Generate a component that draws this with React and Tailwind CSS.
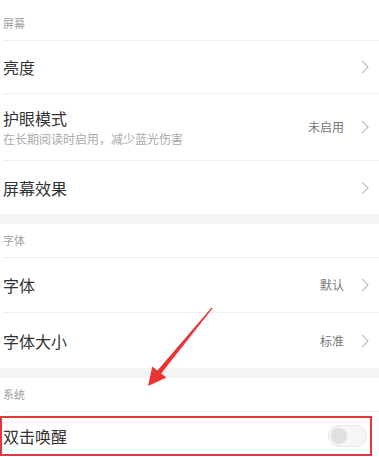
import React from 'react';

const font = { fontFamily: '"Noto Sans CJK SC", "Noto Sans", sans-serif' };

function Chevron() {
  return (
    <svg width="8" height="14" viewBox="0 0 8 14" className="shrink-0">
      <path d="M1 1 L7 7 L1 13" fill="none" stroke="#c4c4c4" strokeWidth="1.3" />
    </svg>
  );
}

function Header({ label, h }) {
  return (
    <div className={`${h} flex items-end pb-[9px] border-b border-[#efefef] text-[11px] text-[#a0a0a0]`}>
      {label}
    </div>
  );
}

function Row({ title, sub, value, h, last }) {
  return (
    <div className={`${h} flex items-center pr-[10px] ${last ? '' : 'border-b border-[#efefef]'}`}>
      <div className="flex-1 flex flex-col">
        <span className="text-[16px] leading-[20px] text-[#333]">{title}</span>
        {sub && <span className="text-[12px] leading-[16px] mt-[3px] text-[#aaa]">{sub}</span>}
      </div>
      {value && <span className="text-[12px] text-[#777] mr-[17px]">{value}</span>}
      <Chevron />
    </div>
  );
}

export default function App() {
  return (
    <div className="relative w-[379px] h-[457px] overflow-hidden bg-white" style={font}>
      <div className="pl-[3px]">
        <Header label="屏幕" h="h-[41px]" />
        <Row title="亮度" h="h-[53px]" />
        <Row title="护眼模式" sub="在长期阅读时启用，减少蓝光伤害" value="未启用" h="h-[67px]" />
        <Row title="屏幕效果" h="h-[53px]" last />
      </div>
      <div className="h-[10px] bg-[#f4f4f4]" />
      <div className="pl-[3px]">
        <Header label="字体" h="h-[34px]" />
        <Row title="字体" value="默认" h="h-[55px]" />
        <Row title="字体大小" value="标准" h="h-[55px]" last />
      </div>
      <div className="h-[10px] bg-[#f4f4f4]" />
      <div className="pl-[3px]">
        <Header label="系统" h="h-[34px]" />
        <div className="h-[48px] flex items-center pr-[12px]">
          <span className="flex-1 text-[16px] text-[#333]">双击唤醒</span>
          <div className="w-[39px] h-[22px] rounded-full border border-[#e6e6e6] bg-[#f6f6f6] flex items-center px-[2px]">
            <div className="w-[16px] h-[16px] rounded-full bg-[#e0e0e0]" />
          </div>
        </div>
      </div>

      {/* annotation overlay */}
      <div className="absolute left-0 top-[416px] w-[372px] h-[40px] border-2 border-[#e0383c]" />
      <svg className="absolute left-0 top-0" width="379" height="457">
        <polygon
          points="212.6,308.3 161.2,373.6 166.3,377.6 148,386 152.3,366.4 157.4,370.4 211.4,307.7"
          fill="#ea3433"
        />
      </svg>
    </div>
  );
}
